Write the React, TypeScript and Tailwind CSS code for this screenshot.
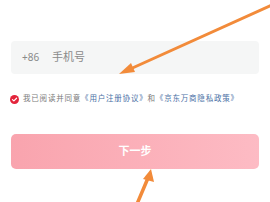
export default function App() {
  return (
    <div
      className="relative w-[270px] h-[202px] overflow-hidden bg-white"
      style={{ fontFamily: '"Noto Sans", "Noto Sans CJK SC", sans-serif' }}
    >
      <div className="flex flex-col px-[11px] pt-[41px]">
        {/* Phone input */}
        <div className="flex items-center h-[33px] rounded-[4px] bg-[#f5f6f6] pl-[11px] text-[10px] text-[#8a8a8a]">
          <span className="w-[30px]">+86</span>
          <span className="text-[11px]">手机号</span>
        </div>

        {/* Agreement */}
        <div className="flex items-center mt-[20px] h-[10px]">
          <svg width="9" height="9" viewBox="0 0 10 10" className="-ml-[1px] mr-[4px]">
            <circle cx="5" cy="5" r="5" fill="#e3243b" />
            <path d="M2.7 5.1 4.3 6.6 7.3 3.6" stroke="#fff" strokeWidth="1.3" fill="none" strokeLinecap="round" strokeLinejoin="round" />
          </svg>
          <span className="text-[7.5px] leading-none tracking-[0.8px] text-[#7a7a7a] whitespace-nowrap">
            我已阅读并同意<span className="text-[#4a6fa5]">《用户注册协议》</span>和<span className="text-[#4a6fa5]">《京东万商隐私政策》</span>
          </span>
        </div>

        {/* Next button */}
        <button className="mt-[30px] h-[35px] rounded-[5px] bg-gradient-to-r from-[#f9a4ae] to-[#fdbbc4] text-white text-[11px] font-bold">
          下一步
        </button>
      </div>

      {/* Annotation arrows */}
      <svg className="absolute inset-0 pointer-events-none" width="270" height="202" viewBox="0 0 270 202">
        <line x1="272" y1="5" x2="128" y2="70" stroke="#f28b3a" strokeWidth="3" strokeLinecap="round" />
        <polygon points="119,74 131,63 135,72" fill="#f28b3a" />
        <line x1="137" y1="204" x2="148" y2="178" stroke="#f28b3a" strokeWidth="3.5" strokeLinecap="round" />
        <polygon points="151,169 143,179 154,182" fill="#f28b3a" />
      </svg>
    </div>
  )
}
